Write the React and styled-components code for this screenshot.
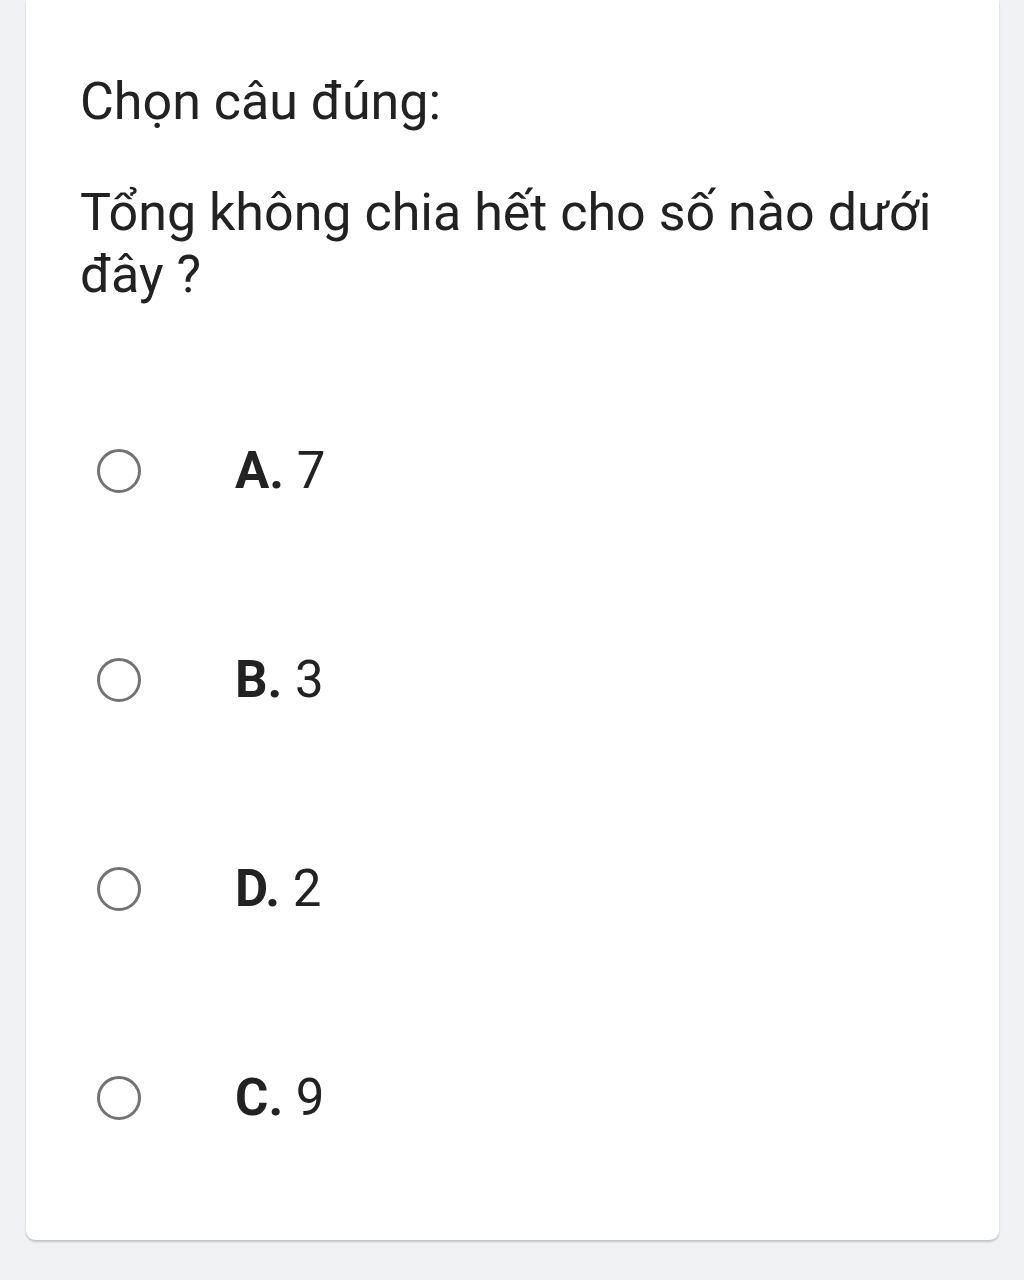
import React from "react";
import styled, { createGlobalStyle } from "styled-components";

const GlobalStyle = createGlobalStyle`
  html, body {
    margin: 0;
    padding: 0;
    background: #f1f2f4;
    font-family: Roboto, "Noto Sans", sans-serif;
  }
`;

const Page = styled.div`
  padding: 0 25px 40px 26px;
`;

const Card = styled.div`
  background: #fff;
  border-radius: 0 0 9px 9px;
  box-shadow: 0 2px 2px rgba(0, 0, 0, 0.18), 0 0 1px rgba(0, 0, 0, 0.12);
  padding: 71px 40px 38px 54px;
`;

const Prompt = styled.p`
  margin: 0;
  font-size: 52px;
  line-height: 62px;
  color: #222;
`;

const Question = styled(Prompt)`
  margin-top: 49px;
`;

const Options = styled.div`
  margin-top: 60px;
  display: flex;
  flex-direction: column;
`;

const Option = styled.label`
  height: 209px;
  display: flex;
  align-items: center;
`;

const Radio = styled.span`
  width: 38px;
  height: 38px;
  margin-left: 17px;
  border: 3px solid #737373;
  border-radius: 50%;
  flex-shrink: 0;
`;

const OptionText = styled.span`
  margin-left: 94px;
  font-size: 51px;
  color: #222;

  b {
    font-weight: 700;
  }
`;

const options = [
  ["A", "7"],
  ["B", "3"],
  ["D", "2"],
  ["C", "9"],
];

export default function App() {
  return (
    <>
      <GlobalStyle />
      <Page>
        <Card>
          <Prompt>Chọn câu đúng:</Prompt>
          <Question>Tổng không chia hết cho số nào dưới đây ?</Question>
          <Options>
            {options.map(([key, value]) => (
              <Option key={key}>
                <Radio />
                <OptionText>
                  <b>{key}.</b> {value}
                </OptionText>
              </Option>
            ))}
          </Options>
        </Card>
      </Page>
    </>
  );
}
